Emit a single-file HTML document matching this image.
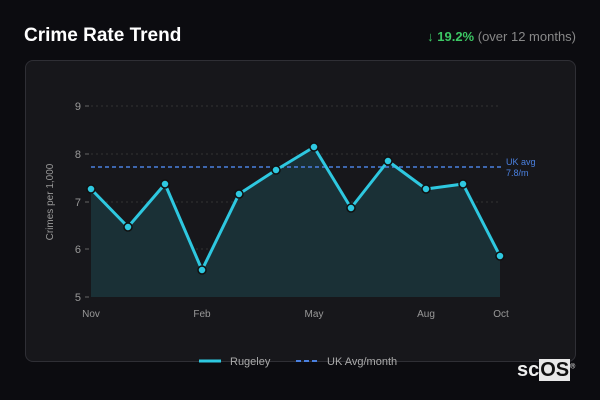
<!DOCTYPE html>
<html><head><style>
body{margin:0;width:600px;height:400px;background:#0c0c10;font-family:"Liberation Sans","DejaVu Sans",sans-serif;position:relative;overflow:hidden}
.t{position:absolute;left:24px;top:25px;color:#fff;font-weight:bold;font-size:19px}
.r{position:absolute;right:24px;top:29px;font-size:13px;color:#888}
.r b{color:#3cc764}
.card{position:absolute;left:25px;top:60px;width:549px;height:300px;background:#17171b;border:1px solid #2f2f35;border-radius:8px}
.logo{position:absolute;left:517px;top:359px;font-size:20px;font-weight:bold;color:#eee}
.logo span{background:#e8e8e8;color:#111;padding:0 1px}
</style></head><body>
<div class="t">Crime Rate Trend</div>
<div class="r"><b>↓ 19.2%</b> (over 12 months)</div>
<div class="card"></div>
<svg width="600" height="400" style="position:absolute;left:0;top:0" font-family="Liberation Sans, DejaVu Sans, sans-serif">
<g stroke="#333" stroke-dasharray="2 3" stroke-width="1">
<line x1="91" x2="501" y1="106" y2="106"/><line x1="91" x2="501" y1="154" y2="154"/><line x1="91" x2="501" y1="202" y2="202"/><line x1="91" x2="501" y1="249" y2="249"/>
</g>
<g fill="#999" font-size="11" text-anchor="end">
<text x="81" y="110">9</text><text x="81" y="158">8</text><text x="81" y="206">7</text><text x="81" y="253">6</text><text x="81" y="301">5</text>
</g>
<g stroke="#666"><line x1="85" x2="89" y1="106" y2="106"/><line x1="85" x2="89" y1="154" y2="154"/><line x1="85" x2="89" y1="202" y2="202"/><line x1="85" x2="89" y1="249" y2="249"/><line x1="85" x2="89" y1="297" y2="297"/></g>
<text x="53" y="202" fill="#999" font-size="10" text-anchor="middle" transform="rotate(-90 53 202)">Crimes per 1,000</text>
<path d="M91,189 L128,227 L165,184 L202,270 L239,194 L276,170 L314,147 L351,208 L388,161 L426,189 L463,184 L500,256 L500,297 L91,297Z" fill="#1a3036"/>
<line x1="91" x2="501" y1="167" y2="167" stroke="#4a80e0" stroke-width="1.5" stroke-dasharray="4 3"/>
<text x="506" y="165" fill="#4a80e0" font-size="9">UK avg</text><text x="506" y="176" fill="#4a80e0" font-size="9">7.8/m</text>
<polyline points="91,189 128,227 165,184 202,270 239,194 276,170 314,147 351,208 388,161 426,189 463,184 500,256" fill="none" stroke="#2ec8e0" stroke-width="3" stroke-linejoin="round"/>
<g fill="#2ec8e0" stroke="#111" stroke-width="1.5">
<circle cx="91" cy="189" r="4"/><circle cx="128" cy="227" r="4"/><circle cx="165" cy="184" r="4"/><circle cx="202" cy="270" r="4"/><circle cx="239" cy="194" r="4"/><circle cx="276" cy="170" r="4"/><circle cx="314" cy="147" r="4"/><circle cx="351" cy="208" r="4"/><circle cx="388" cy="161" r="4"/><circle cx="426" cy="189" r="4"/><circle cx="463" cy="184" r="4"/><circle cx="500" cy="256" r="4"/>
</g>
<g fill="#999" font-size="10" text-anchor="middle">
<text x="91" y="317">Nov</text><text x="202" y="317">Feb</text><text x="314" y="317">May</text><text x="426" y="317">Aug</text><text x="501" y="317">Oct</text>
</g>
<line x1="199" x2="221" y1="361" y2="361" stroke="#2ec8e0" stroke-width="3"/>
<text x="230" y="365" fill="#aaa" font-size="11">Rugeley</text>
<line x1="296" x2="319" y1="361" y2="361" stroke="#4a80e0" stroke-width="2" stroke-dasharray="5 3"/>
<text x="327" y="365" fill="#aaa" font-size="11">UK Avg/month</text>
</svg>
<div class="logo">sc<span>OS</span><sup style="font-size:7px;font-weight:normal">®</sup></div>
</body></html>
